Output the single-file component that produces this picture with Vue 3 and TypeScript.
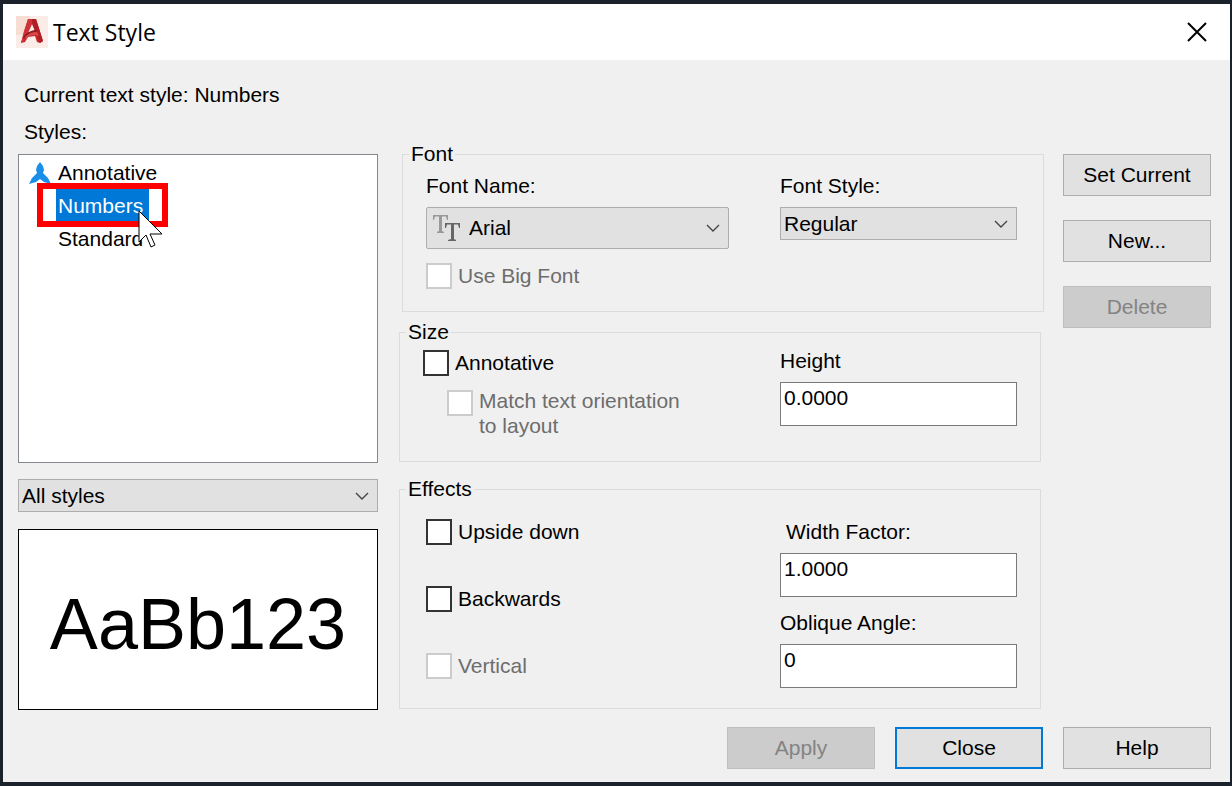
<script setup lang="ts">
import { ref } from 'vue'

interface TextStyle {
  name: string
  annotative: boolean
}

const styles: TextStyle[] = [
  { name: 'Annotative', annotative: true },
  { name: 'Numbers', annotative: false },
  { name: 'Standard', annotative: false },
]

const current = ref('Numbers')
const selected = ref('Numbers')
const filter = ref('All styles')
const fontName = ref('Arial')
const fontStyle = ref('Regular')
const annotative = ref(false)
const upsideDown = ref(false)
const backwards = ref(false)
const height = ref('0.0000')
const widthFactor = ref('1.0000')
const obliqueAngle = ref('0')
</script>

<template>
  <div class="desktop">
    <main class="dialog">
      <header class="titlebar">
        <svg class="logo" viewBox="0 0 32 32" aria-hidden="true">
          <rect width="32" height="32" fill="#fcece7" />
          <path d="M0 0H14L10 19H0Z" fill="#f8ddd5" />
          <path d="M12 3H20L27 25L24 27L21 26L19 20L12 21L9 26L5 27Z" fill="#c3272d" />
          <path d="M16 8L19 15L12 17Z" fill="#fcece7" />
          <path d="M20 3L27 25L24 27L16 7V3Z" fill="#b01f25" />
          <path d="M12 3L8 15L5 27L8 25L16 7V3Z" fill="#cf3238" />
          <path d="M7 21C11 16 16 14 20 14L21 16C15 16 11 18 8 23Z" fill="#8f1b20" />
          <path d="M9 21C13 17 17 16 21 16L23 20C18 18 14 19 10 23Z" fill="#d9474a" />
        </svg>
        <h1>Text Style</h1>
        <button class="dismiss" type="button" aria-label="Close window">
          <svg viewBox="0 0 20 20" aria-hidden="true">
            <path d="M1 1L19 19M19 1L1 19" fill="none" stroke="#000" stroke-width="2" />
          </svg>
        </button>
      </header>

      <div class="content">
        <p class="current">Current text style: {{ current }}</p>

        <div class="columns">
          <section class="left">
            <span id="styles-label" class="styles-label">Styles:</span>
            <div class="list-wrap">
              <ul class="list" role="listbox" aria-labelledby="styles-label">
                <li
                  v-for="s in styles"
                  :key="s.name"
                  role="option"
                  :aria-selected="s.name === selected"
                  @click="selected = s.name"
                >
                  <span class="mark">
                    <svg v-if="s.annotative" viewBox="0 0 22 22" aria-hidden="true">
                      <path
                        d="M11 0L14 4L15 8L14 11L19 16L22 22L15 20L11 17L7 20L0 22L3 16L8 11L7 8L8 4Z"
                        fill="#1a8fe8"
                      />
                    </svg>
                  </span>
                  <span class="name" :class="{ selected: s.name === selected }">{{ s.name }}</span>
                </li>
              </ul>
              <div class="highlight"></div>
              <svg class="pointer" viewBox="0 0 26 40" aria-hidden="true">
                <path
                  d="M1 1V32L8 25L13 37L17 35L12 24H24Z"
                  fill="#fff"
                  stroke="#000"
                  stroke-width="1"
                />
              </svg>
            </div>
            <div class="select">
              <select v-model="filter" aria-label="Style filter">
                <option>All styles</option>
                <option>Styles in use</option>
              </select>
              <svg class="chevron" viewBox="0 0 14 8" aria-hidden="true">
                <path d="M1 1L7 7L13 1" fill="none" stroke="#444" stroke-width="1.4" />
              </svg>
            </div>
            <div class="preview">AaBb123</div>
          </section>

          <section class="middle">
            <fieldset class="font">
              <legend>Font</legend>
              <div class="fields">
                <div class="col">
                  <label class="caption" for="font-name">Font Name:</label>
                  <div class="select tall">
                    <svg class="truetype" viewBox="0 0 28 28" aria-hidden="true">
                      <path d="M1 1H16V6H15L14 2.500H10V17L12 18V19H5V18L7 17V2.500H3L2 6H1Z" fill="#999" />
                      <path d="M13 9H28V14H27L26 10.500H22V25L24 26V27H16V26L19 25V10.500H15L14 14H13Z" fill="#666" />
                    </svg>
                    <select id="font-name" v-model="fontName">
                      <option>Arial</option>
                    </select>
                    <svg class="chevron" viewBox="0 0 14 8" aria-hidden="true">
                      <path d="M1 1L7 7L13 1" fill="none" stroke="#444" stroke-width="1.4" />
                    </svg>
                  </div>
                  <label class="check off">
                    <input type="checkbox" disabled />
                    <span>Use Big Font</span>
                  </label>
                </div>
                <div class="col">
                  <label class="caption" for="font-style">Font Style:</label>
                  <div class="select">
                    <select id="font-style" v-model="fontStyle">
                      <option>Regular</option>
                      <option>Bold</option>
                      <option>Italic</option>
                    </select>
                    <svg class="chevron" viewBox="0 0 14 8" aria-hidden="true">
                      <path d="M1 1L7 7L13 1" fill="none" stroke="#444" stroke-width="1.4" />
                    </svg>
                  </div>
                </div>
              </div>
            </fieldset>

            <fieldset class="size">
              <legend>Size</legend>
              <div class="fields">
                <div class="col checks">
                  <label class="check">
                    <input v-model="annotative" type="checkbox" />
                    <span>Annotative</span>
                  </label>
                  <label class="check off nested">
                    <input type="checkbox" disabled />
                    <span>Match text orientation<br />to layout</span>
                  </label>
                </div>
                <div class="col">
                  <label class="caption" for="height">Height</label>
                  <input id="height" v-model="height" class="box" type="text" />
                </div>
              </div>
            </fieldset>

            <fieldset class="effects">
              <legend>Effects</legend>
              <div class="fields">
                <div class="col checks">
                  <label class="check">
                    <input v-model="upsideDown" type="checkbox" />
                    <span>Upside down</span>
                  </label>
                  <label class="check">
                    <input v-model="backwards" type="checkbox" />
                    <span>Backwards</span>
                  </label>
                  <label class="check off">
                    <input type="checkbox" disabled />
                    <span>Vertical</span>
                  </label>
                </div>
                <div class="col">
                  <label class="caption indented" for="width-factor">Width Factor:</label>
                  <input id="width-factor" v-model="widthFactor" class="box" type="text" />
                  <label class="caption second" for="oblique">Oblique Angle:</label>
                  <input id="oblique" v-model="obliqueAngle" class="box" type="text" />
                </div>
              </div>
            </fieldset>
          </section>

          <section class="actions">
            <button class="btn" type="button">Set Current</button>
            <button class="btn" type="button">New...</button>
            <button class="btn" type="button" disabled>Delete</button>
          </section>
        </div>

        <footer class="footer">
          <button class="btn" type="button" disabled>Apply</button>
          <button class="btn primary" type="button">Close</button>
          <button class="btn" type="button">Help</button>
        </footer>
      </div>
    </main>
  </div>
</template>

<style>
body {
  margin: 0;
  background: #1c222b;
}
</style>

<style scoped>
.desktop {
  box-sizing: border-box;
  min-height: 100vh;
  padding: 4px 2px 4px 3px;
  display: flex;
  background: #1c222b;
  color: #000;
  font-family: "Liberation Sans", Arial, sans-serif;
  font-size: 21px;
  line-height: 26px;
}

.dialog {
  flex: 1;
  min-width: 0;
  background: #f0f0f0;
}

.titlebar {
  display: flex;
  align-items: center;
  height: 56px;
  padding: 0 23px 0 13px;
  background: #fff;
}

.logo {
  width: 32px;
  height: 32px;
}

h1 {
  flex: 1;
  margin: 0 0 0 5px;
  font-family: "Open Sans", "Noto Sans", sans-serif;
  font-size: 23px;
  font-weight: 400;
  line-height: 30px;
}

.dismiss {
  display: flex;
  padding: 0;
  border: 0;
  background: none;
}

.dismiss svg {
  width: 20px;
  height: 20px;
}

.content {
  padding: 22px 19px 13px 15px;
}

.current {
  margin: 0 0 11px;
  padding-left: 6px;
}

.columns {
  display: grid;
  grid-template-columns: minmax(0, 360fr) minmax(0, 666fr) auto;
}

.left {
  display: flex;
  flex-direction: column;
}

.styles-label {
  padding-left: 6px;
  margin-bottom: 9px;
}

.list-wrap {
  position: relative;
  flex: 1;
  display: flex;
  min-height: 309px;
}

.list {
  flex: 1;
  margin: 0;
  padding: 1px 0 0 10px;
  border: 1px solid #828790;
  background: #fff;
  list-style: none;
}

.list li {
  display: flex;
  line-height: 33px;
}

.mark {
  width: 27px;
  display: flex;
  align-items: center;
}

.mark svg {
  width: 22px;
  height: 22px;
}

.name {
  padding: 0 6px 0 2px;
}

.name.selected {
  background: #0078d7;
  color: #fff;
}

.highlight {
  position: absolute;
  box-sizing: border-box;
  left: 19px;
  top: 29px;
  width: 131px;
  height: 44px;
  border: 6px solid #f00;
}

.pointer {
  position: absolute;
  left: 120px;
  top: 56px;
  width: 26px;
  height: 40px;
}

.select {
  position: relative;
  display: flex;
  height: 33px;
}

.left .select {
  margin: 16px 0 17px;
}

.select.tall {
  height: 42px;
}

.select select {
  flex: 1;
  min-width: 0;
  appearance: none;
  margin: 0;
  padding: 0 30px 0 3px;
  border: 1px solid #adadad;
  border-radius: 0;
  background: #e1e1e1;
  color: #000;
  font: inherit;
}

.select.tall select {
  padding-left: 42px;
  border-radius: 2px;
}

.chevron {
  position: absolute;
  right: 9px;
  top: 50%;
  width: 14px;
  height: 8px;
  margin-top: -4px;
  pointer-events: none;
}

.truetype {
  position: absolute;
  left: 6px;
  top: 7px;
  width: 28px;
  height: 28px;
}

.preview {
  box-sizing: border-box;
  height: 181px;
  padding-top: 8px;
  display: flex;
  align-items: center;
  justify-content: center;
  border: 1px solid #000;
  background: #fff;
  font-size: 72px;
}

.middle {
  padding: 23px 0 0 21px;
}

fieldset {
  min-width: 0;
  margin: 0;
  padding: 0 6px;
  border: 1px solid #dcdcdc;
}

legend {
  padding: 0 2px;
  line-height: 24px;
}

.fields {
  display: grid;
  grid-template-columns: minmax(0, 1fr) 237px;
  column-gap: 51px;
}

.col {
  display: flex;
  flex-direction: column;
}

.font {
  margin-left: 3px;
}

.font .fields {
  padding: 7px 20px 22px 17px;
}

.font .check {
  margin-top: 14px;
}

.size {
  margin: 8px 3px 15px 0;
}

.size .fields {
  padding: 4px 17px 23px;
}

.size .checks {
  padding-top: 2px;
  gap: 12px;
}

.effects {
  margin-right: 3px;
}

.effects .fields {
  padding: 18px 17px 20px 20px;
}

.effects .checks {
  gap: 41px;
}

.caption {
  margin-bottom: 8px;
}

.caption.indented {
  padding-left: 6px;
}

.caption.second {
  margin-top: 13px;
}

.check {
  display: flex;
  gap: 6px;
}

.check.nested {
  margin-left: 24px;
  line-height: 25px;
}

.check input {
  appearance: none;
  box-sizing: border-box;
  flex: none;
  width: 26px;
  height: 26px;
  margin: 0;
  border: 2px solid #333;
  background: #fff;
}

.check.nested input {
  margin-top: 2px;
}

.check.off {
  color: #6d6d6d;
}

.check.off input {
  border-color: #ccc;
}

.box {
  box-sizing: border-box;
  width: 100%;
  height: 44px;
  padding: 2px 3px 14px;
  border: 1px solid #7a7a7a;
  border-radius: 0;
  background: #fff;
  color: #000;
  font: inherit;
}

.actions {
  display: flex;
  flex-direction: column;
  gap: 24px;
  padding: 35px 0 0 19px;
}

.btn {
  box-sizing: border-box;
  width: 148px;
  height: 42px;
  padding: 0;
  border: 1px solid #adadad;
  background: #e1e1e1;
  color: #000;
  font: inherit;
}

.btn:disabled {
  border-color: #bfbfbf;
  background: #ccc;
  color: #838383;
}

.btn.primary {
  border: 2px solid #0078d7;
}

.footer {
  display: flex;
  justify-content: flex-end;
  gap: 20px;
  margin-top: 17px;
}
</style>
